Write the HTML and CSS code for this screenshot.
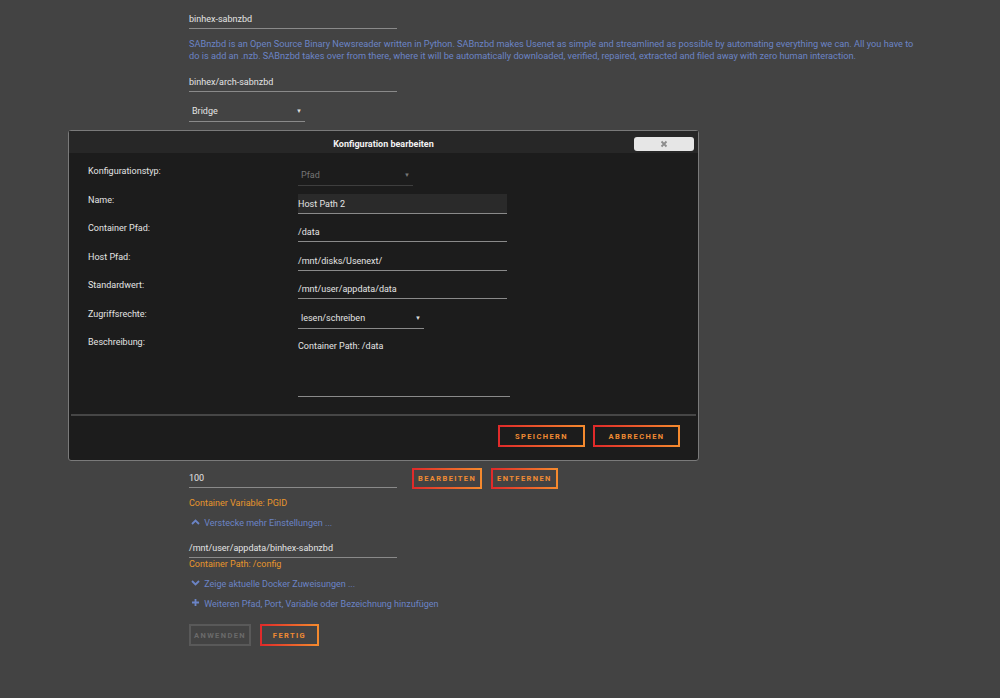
FILE: index.html
```html
<!DOCTYPE html>
<html>
<head>
  <title>SABnzbd bearbeiten</title>
  <meta charset="utf-8">
  <link rel="stylesheet" href="styles.css">
</head>
<body>
  <div class="page">
    <div class="field wide first">binhex-sabnzbd</div>
    <p class="desc">SABnzbd is an Open Source Binary Newsreader written in Python. SABnzbd makes Usenet as simple and streamlined as possible by automating everything we can. All you have to do is add an .nzb. SABnzbd takes over from there, where it will be automatically downloaded, verified, repaired, extracted and filed away with zero human interaction.</p>
    <div class="field wide">binhex/arch-sabnzbd</div>
    <div class="field select network"><span>Bridge</span><span class="arrow">&#9660;</span></div>

    <!-- rows hidden behind the dialog -->
    <div class="covered"></div>

    <div class="row">
      <div class="field wide">100</div>
      <button class="btn small">Bearbeiten</button>
      <button class="btn small">Entfernen</button>
    </div>
    <div class="note">Container Variable: PGID</div>
    <div class="link toggle">
      <svg width="9" height="6" viewBox="0 0 9 6"><path d="M1 5 L4.5 1.5 L8 5" fill="none" stroke="#6b84c6" stroke-width="1.8"/></svg>
      Verstecke mehr Einstellungen ...
    </div>
    <div class="field wide config">/mnt/user/appdata/binhex-sabnzbd</div>
    <div class="note tight">Container Path: /config</div>
    <div class="link toggle">
      <svg width="9" height="6" viewBox="0 0 9 6"><path d="M1 1 L4.5 4.5 L8 1" fill="none" stroke="#6b84c6" stroke-width="1.8"/></svg>
      Zeige aktuelle Docker Zuweisungen ...
    </div>
    <div class="link toggle">
      <svg class="plus" width="9" height="9" viewBox="0 0 9 9"><path d="M4.5 1 V8 M1 4.5 H8" fill="none" stroke="#6b84c6" stroke-width="1.8"/></svg>
      Weiteren Pfad, Port, Variable oder Bezeichnung hinzufügen
    </div>
    <div class="actions">
      <button class="btn disabled">Anwenden</button>
      <button class="btn">Fertig</button>
    </div>
  </div>

  <div class="dialog">
    <div class="dialogHead">
      <span class="dialogTitle">Konfiguration bearbeiten</span>
      <span class="close">
        <svg width="8" height="8" viewBox="0 0 8 8"><path d="M1.5 1.5 L6.5 6.5 M6.5 1.5 L1.5 6.5" stroke="#8c8c8c" stroke-width="1.8"/></svg>
      </span>
    </div>
    <div class="dialogBody">
      <div class="formRow">
        <label>Konfigurationstyp:</label>
        <div class="field select type"><span>Pfad</span><span class="arrow">&#9660;</span></div>
      </div>
      <div class="formRow">
        <label>Name:</label>
        <div class="field input filled">Host Path 2</div>
      </div>
      <div class="formRow">
        <label>Container Pfad:</label>
        <div class="field input">/data</div>
      </div>
      <div class="formRow">
        <label>Host Pfad:</label>
        <div class="field input">/mnt/disks/Usenext/</div>
      </div>
      <div class="formRow">
        <label>Standardwert:</label>
        <div class="field input">/mnt/user/appdata/data</div>
      </div>
      <div class="formRow">
        <label>Zugriffsrechte:</label>
        <div class="field select mode"><span>lesen/schreiben</span><span class="arrow">&#9660;</span></div>
      </div>
      <div class="formRow last">
        <label>Beschreibung:</label>
        <div class="field textarea">Container Path: /data</div>
      </div>
    </div>
    <div class="dialogFoot">
      <button class="btn big">Speichern</button>
      <button class="btn big">Abbrechen</button>
    </div>
  </div>
</body>
</html>
```

FILE: styles.css
```css
body {
  margin: 0;
  background-color: #434343;
  font-family: Roboto, "Open Sans", sans-serif;
  font-size: 9px;
  color: #e4e4e4;
}

.page {
  padding: 13px 0 40px 189px;
}

.field {
  line-height: 12px;
  padding-bottom: 3px;
  border-bottom: 1px solid #8a8a8a;
}

.wide {
  width: 208px;
}

.desc {
  margin: 9px 0 0 0;
  width: 732px;
  font-size: 9.2px;
  line-height: 12px;
  color: #6b84c6;
}

.desc + .field {
  margin-top: 14px;
}

.select {
  display: flex;
  justify-content: space-between;
  padding-left: 3px;
  padding-right: 3px;
  padding-bottom: 4px;
}

.arrow {
  font-size: 6px;
  line-height: 12px;
  color: #ddd;
}

.network {
  margin-top: 13px;
  width: 110px;
}

.covered {
  height: 346px;
}

.row {
  display: flex;
  align-items: flex-end;
}

.row .field {
  margin-right: 15px;
  margin-bottom: 1px;
}

.btn {
  font-family: Roboto, sans-serif;
  font-size: 7.5px;
  font-weight: bold;
  letter-spacing: 1.4px;
  text-transform: uppercase;
  background: transparent;
  padding: 0 10px;
  height: 22px;
  border: 2px solid;
  border-image: linear-gradient(90deg, #e02a2a, #f58a2e) 1;
  color: #f08b33;
  cursor: pointer;
}

.btn.small {
  height: 21px;
  margin-right: 9px;
  padding: 0 4px;
}

.btn.big {
  width: 87px;
  margin-left: 8px;
}

.btn.disabled {
  border-image: none;
  border-color: #595959;
  color: #6a6a6a;
  width: 62px;
  padding: 0;
}

.note {
  margin-top: 8px;
  line-height: 12px;
  color: #e8962c;
}

.note.tight {
  margin-top: 0;
}

.link {
  margin-top: 8px;
  line-height: 12px;
  color: #6b84c6;
}

.toggle svg {
  margin: 0 2px 1px 2px;
}

.toggle .plus {
  vertical-align: -1px;
}

.config {
  margin-top: 13px;
}

.actions {
  display: flex;
  gap: 9px;
  margin-top: 14px;
}

.actions .btn:last-child {
  width: 59px;
  padding: 0;
}

/* dialog over the page */
.dialog {
  position: absolute;
  left: 68px;
  top: 130px;
  width: 629px;
  height: 329px;
  background-color: #1c1c1c;
  border: 1px solid #7a7a7a;
  border-radius: 3px;
  display: flex;
  flex-direction: column;
}

.dialogHead {
  height: 22px;
  background-color: #272727;
  display: flex;
  align-items: center;
  justify-content: center;
  position: relative;
}

.dialogTitle {
  font-weight: bold;
  color: #f2f2f2;
  padding-top: 4px;
}

.close {
  position: absolute;
  right: 4px;
  top: 6px;
  width: 60px;
  height: 14px;
  background-color: #e6e6e6;
  border-radius: 3px;
  display: flex;
  align-items: center;
  justify-content: center;
}

.dialogBody {
  padding: 12px 0 0 17px;
  height: 249px;
  border-bottom: 2px solid #464646;
  margin: 0 2px;
}

.formRow {
  display: flex;
  height: 28.5px;
}

.formRow label {
  width: 210px;
  line-height: 12px;
  color: #e4e4e4;
}

.formRow .field {
  margin-top: 4px;
  height: 12px;
}

.input {
  width: 209px;
}

.filled {
  margin-top: 0 !important;
  padding-top: 4px;
  background-color: #2a2a2a;
}

.type {
  width: 109px;
  color: #767676;
  border-bottom-color: #3e3e3e;
}

.type .arrow {
  color: #777;
}

.mode {
  width: 120px;
}

.textarea {
  width: 212px;
  height: 53px !important;
}

.dialogFoot {
  display: flex;
  justify-content: flex-end;
  padding: 9px 18px 0 0;
}
```
